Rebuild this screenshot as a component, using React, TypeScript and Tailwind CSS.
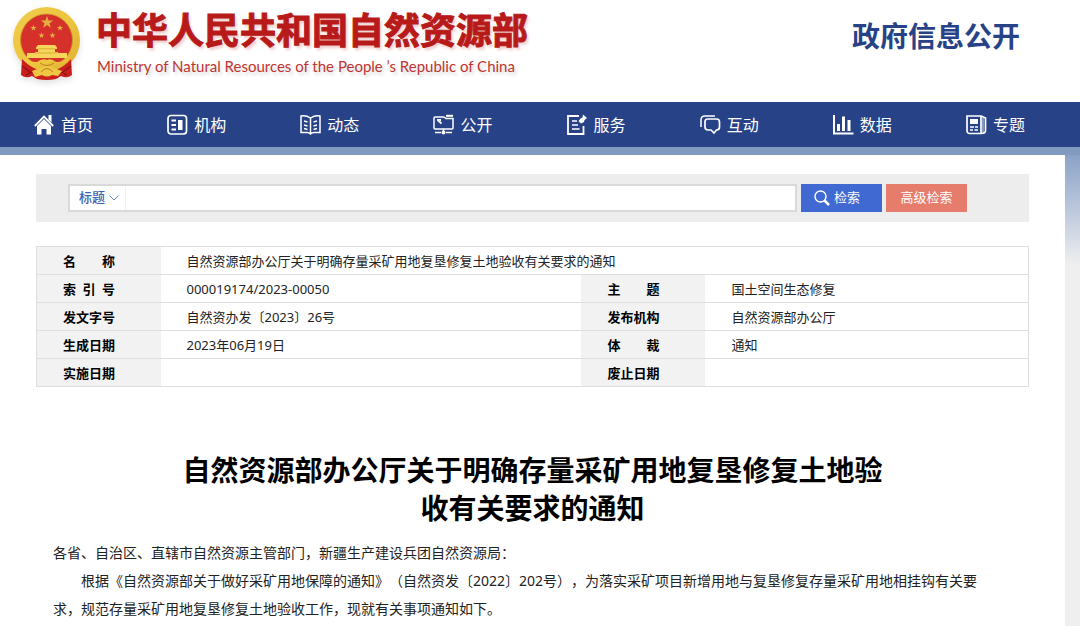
import React from 'react';
import { ChevronDown } from 'lucide-react';

const star = (cx: number, cy: number, r: number) =>
  Array.from({ length: 10 }, (_, i) => {
    const a = (Math.PI / 5) * i - Math.PI / 2;
    const d = i % 2 ? r * 0.4 : r;
    return `${(cx + d * Math.cos(a)).toFixed(2)},${(cy + d * Math.sin(a)).toFixed(2)}`;
  }).join(' ');

function Emblem() {
  return (
    <svg viewBox="0 0 72 78" className="h-[78px] w-[72px] shrink-0 drop-shadow-md" aria-hidden="true">
      <defs>
        <linearGradient id="gold" x1="0" y1="0" x2="1" y2="1">
          <stop offset="0" stopColor="#f0cc4c" />
          <stop offset="0.5" stopColor="#edc63f" />
          <stop offset="1" stopColor="#dfae2e" />
        </linearGradient>
      </defs>
      <ellipse cx="34.500" cy="34" rx="33.500" ry="33" fill="url(#gold)" />
      <circle cx="34.500" cy="34" r="26" fill="#d6302a" stroke="#c9952a" strokeWidth="0.800" />
      <g fill="#e3b040">
        <polygon points={star(35, 16.5, 6.5)} />
        <polygon points={star(21.5, 22, 3.2)} />
        <polygon points={star(48, 22, 3.2)} />
        <polygon points={star(29.5, 29.5, 3.2)} />
        <polygon points={star(40.5, 29.5, 3.2)} />
      </g>
      <path d="M26 39 H43 L45 41.500 V43 H43 V46 H46 V47 H55 V52 H15 V47 H23 V46 H26 V43 H24 V41.500Z" fill="#f5d65a" />
      <path d="M26 42.800 H43 M23 47 H46" stroke="#cf9a2c" strokeWidth="0.700" />
      <path d="M10 53 Q17 60 24 63 L46 63 Q53 60 59 53 L60 69 Q55 73 49 70 L44 73 Q35 75 25 73 L20 70 Q14 73 9 69Z" fill="#c9201e" />
      <path d="M10 60 L18 66 M59 60 L51 66 M14 69 L22 65 M55 69 L47 65" stroke="#8f1212" strokeWidth="1.200" fill="none" />
      <path d="M10 50 Q16 56 25 56 Q30 52 35 54 Q39 52 44 56 Q53 56 59 50 Q55 60 44 62 L40 60 H29 L25 62 Q14 60 10 50Z" fill="url(#gold)" />
      <path d="M20 65 L28 62 Q35 57 42 62 L50 65 L46 70 L40 69 Q35 72 30 69 L23 71Z" fill="#edc642" />
      <path d="M28 57 Q35 62 42 57 M29 66 Q35 59 41 66" stroke="#bb7c22" strokeWidth="1" fill="none" />
    </svg>
  );
}

function NavIcon({ children }: { children: React.ReactNode }) {
  return (
    <svg
      viewBox="0 0 20 20"
      className="size-5 shrink-0 overflow-visible"
      fill="none"
      stroke="currentColor"
      strokeWidth="1.500"
      aria-hidden="true"
    >
      {children}
    </svg>
  );
}

const navItems = [
  {
    label: '首页',
    icon: (
      <>
        <path d="M0.800 11 L10 1.500 L19.200 11" strokeWidth="1.800" />
        <path d="M14.500 0 H17.500 V7.500 L14.500 4.500Z" fill="currentColor" stroke="none" />
        <path d="M3 11 L10 4 L17 11 V19.500 H12.500 V14 H7.500 V19.500 H3Z" fill="currentColor" stroke="none" />
      </>
    ),
  },
  {
    label: '机构',
    icon: (
      <>
        <rect x="1" y="0.500" width="18.500" height="18.500" rx="3" strokeWidth="1.700" />
        <path d="M4.500 5.500 H9 M4.500 10 H9 M4.500 14.500 H9" strokeWidth="1.800" />
        <rect x="11" y="5" width="4.500" height="10" fill="currentColor" stroke="none" />
      </>
    ),
  },
  {
    label: '动态',
    icon: (
      <>
        <path d="M10.500 3 Q6 0 1 1 V17.500 H7 Q9 17.500 10.500 19 Q12 17.500 14 17.500 H20 V1 Q15 0 10.500 3 V18" />
        <path d="M4 6 L7.500 7 M4 10 L7.500 11 M4 13.500 L7.500 14.500 M17 6 L13.500 7 M17 10 L13.500 11 M17 13.500 L13.500 14.500" />
      </>
    ),
  },
  {
    label: '公开',
    icon: (
      <>
        <path d="M11 2 H2 Q1 2 1 3 V13 Q1 14 2 14 H19 Q20 14 20 13 V3.500 H13 L11 2" />
        <path d="M13 0.800 H20" strokeWidth="2" />
        <path d="M4.500 5 L8.500 8.500 M4 5 H8" strokeWidth="1.800" />
        <path d="M10.500 14 V17 M2 17.500 H8 M13 17.500 H19" />
        <circle cx="10.500" cy="17.500" r="2" fill="currentColor" stroke="none" />
      </>
    ),
  },
  {
    label: '服务',
    icon: (
      <>
        <path d="M12 1 H1 V19 H16.500 V11" strokeWidth="1.800" />
        <path d="M5 6 H10 M5 10 H11 M5 14 H12.500" strokeWidth="1.600" />
        <path d="M16 -0.500 L20 3 L17.500 5 L17 7 L14 8.500 L11.500 6 L13.500 3.500 L15.500 2.500Z" fill="currentColor" stroke="none" />
      </>
    ),
  },
  {
    label: '互动',
    icon: (
      <>
        <path d="M1 12 V5 Q1 1 5 1 H15" />
        <path d="M7.500 4 H16.500 Q19.500 4 19.500 7 V12 Q19.500 15 16.500 15 L14 18 L11 15 H8 Q5 15 5 12 V7 Q5 4 7.500 4Z" strokeWidth="1.700" />
      </>
    ),
  },
  {
    label: '数据',
    icon: (
      <>
        <path d="M1 0 V18.500 H20.500" strokeWidth="2" />
        <path d="M5.500 9 V16 M10.500 1.500 V16 M16 5 V16" strokeWidth="3" />
      </>
    ),
  },
  {
    label: '专题',
    icon: (
      <>
        <path d="M15 18.500 H4 Q1 18.500 1 15.500 V1 H15 V18.500 Q19.500 18.500 19.500 15.500 V3 L15 1" strokeWidth="1.700" />
        <rect x="4" y="4" width="8" height="5" fill="currentColor" stroke="none" />
        <path d="M4 12 H8 M9 12 H12 M4 15 H7 M8.500 15 H12" />
        <path d="M17 3 V17" opacity="0.600" />
      </>
    ),
  },
];

const rows = [
  ['索\u2002引\u2002号', '000019174/2023-00050', '主　　题', '国土空间生态修复'],
  ['发文字号', '自然资办发〔2023〕26号', '发布机构', '自然资源部办公厅'],
  ['生成日期', '2023年06月19日', '体　　裁', '通知'],
  ['实施日期', '', '废止日期', ''],
];

function LabelCell({ children }: { children: React.ReactNode }) {
  return (
    <th scope="row" className="bg-[#f2f2f2] pl-[26px] text-left font-bold text-black">
      {children}
    </th>
  );
}

export default function App() {
  return (
    <div className="min-h-screen bg-white font-['Noto_Sans','Noto_Sans_CJK_SC',sans-serif] text-[#222] [text-spacing-trim:space-all]">
      <header className="flex h-[102px] items-start justify-between pl-3 pr-[60px]">
        <div className="flex gap-3 pt-[6px]">
          <Emblem />
          <div className="whitespace-nowrap">
            <h1 className="text-4xl font-bold leading-[50px] text-[#b81a1a] [-webkit-text-stroke:1px_#b81a1a] [text-shadow:2px_3px_3px_#f0cccc]">
              中华人民共和国自然资源部
            </h1>
            <p className="pl-px font-['Lato',sans-serif] text-[15px] leading-5 text-[#bd3531] [text-shadow:2px_3px_3px_#d8d8d8]">
              Ministry of Natural Resources of the People ’s Republic of China
            </p>
          </div>
        </div>
        <p className="pt-4 text-[28px] font-bold leading-10 text-[#274287]">政府信息公开</p>
      </header>

      <nav className="border-b-8 border-[#8299c0] bg-[#274287] pr-[15px]">
        <ul className="grid grid-cols-8">
          {navItems.map((item) => (
            <li key={item.label}>
              <a href="#" className="flex h-[45px] items-center gap-[7px] pl-[34px] text-white">
                <NavIcon>{item.icon}</NavIcon>
                <span className="text-base">{item.label}</span>
              </a>
            </li>
          ))}
        </ul>
      </nav>

      <div className="bg-[#efefef] bg-linear-to-b from-[#8ba2c8] to-[#efefef] to-[110px] pr-[15px]">
        <main className="min-h-[471px] bg-white px-9 pt-[19px]">
          <form className="flex h-12 items-center gap-1 bg-[#ededed] pl-8 pr-[62px] text-[13px]">
            <div className="flex h-7 min-w-0 flex-1 items-center border-2 border-[#d9d9d9] bg-white">
              <div className="relative flex h-full items-center">
                <select
                  aria-label="检索范围"
                  className="h-full w-[56px] appearance-none border-r border-[#f2f2f2] pl-[9px] font-medium text-[#3d62b5] outline-none"
                >
                  <option>标题</option>
                </select>
                <ChevronDown className="pointer-events-none absolute right-1 size-4 text-[#5f86c8]" strokeWidth={1.5} />
              </div>
              <input type="text" aria-label="检索词" className="h-full min-w-0 flex-1 px-2 outline-none" />
            </div>
            <button type="submit" className="flex h-7 w-[81px] items-center gap-1 bg-[#4169d2] pl-[13px] text-white">
              <svg viewBox="0 0 16 16" className="size-4" fill="none" stroke="currentColor" aria-hidden="true">
                <circle cx="6.500" cy="6.500" r="5.500" strokeWidth="1.400" />
                <path d="M10.500 10.500 L15 15" strokeWidth="2.500" />
              </svg>
              检索
            </button>
            <button type="button" className="h-7 w-[81px] bg-[#e67c6b] text-white">
              高级检索
            </button>
          </form>

          <table className="mt-6 w-full table-fixed border-collapse border border-[#dedede] text-[13px] leading-5">
            <colgroup>
              <col className="w-[124px]" />
              <col />
              <col className="w-[124px]" />
              <col className="w-[323px]" />
            </colgroup>
            <tbody>
              <tr className="h-7 border-b border-[#dedede]">
                <LabelCell>名　　称</LabelCell>
                <td colSpan={3} className="pl-[26px]">
                  自然资源部办公厅关于明确存量采矿用地复垦修复土地验收有关要求的通知
                </td>
              </tr>
              {rows.map(([label, value, label2, value2]) => (
                <tr key={label} className="h-7 border-b border-[#dedede]">
                  <LabelCell>{label}</LabelCell>
                  <td className="pl-[26px]">{value}</td>
                  <LabelCell>{label2}</LabelCell>
                  <td className="pl-[26px]">{value2}</td>
                </tr>
              ))}
            </tbody>
          </table>

          <article className="px-[17px] pt-16">
            <h2 className="mx-auto max-w-[720px] text-center text-[28px] font-bold leading-[38px] text-black">
              自然资源部办公厅关于明确存量采矿用地复垦修复土地验收有关要求的通知
            </h2>
            <div className="mt-3 pr-3 text-sm leading-7">
              <p>各省、自治区、直辖市自然资源主管部门，新疆生产建设兵团自然资源局：</p>
              <p className="indent-[2em]">
                根据《自然资源部关于做好采矿用地保障的通知》（自然资发〔2022〕202号），为落实采矿项目新增用地与复垦修复存量采矿用地相挂钩有关要求，规范存量采矿用地复垦修复土地验收工作，现就有关事项通知如下。
              </p>
            </div>
          </article>
        </main>
      </div>
    </div>
  );
}
